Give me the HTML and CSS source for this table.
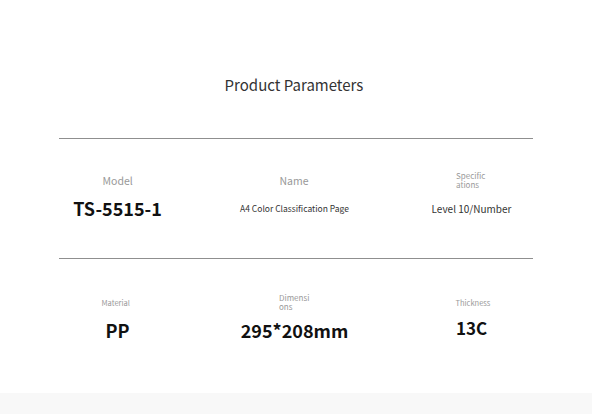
FILE: index.html
```html
<!DOCTYPE html>
<html>
<head>
<meta charset="utf-8">
<link rel="stylesheet" href="styles.css">
</head>
<body>
<div class="page">
  <h1 class="title">Product Parameters</h1>
  <div class="rule"></div>
  <div class="row row-first">
    <div class="cell">
      <div class="label"><span class="lbl-box lbl-lg">Model</span></div>
      <div class="value v-big">TS-5515-1</div>
    </div>
    <div class="cell">
      <div class="label"><span class="lbl-box lbl-lg">Name</span></div>
      <div class="value v-small">A4 Color Classification Page</div>
    </div>
    <div class="cell">
      <div class="label"><span class="lbl-box lbl-sm">Specifications</span></div>
      <div class="value v-mid">Level 10/Number</div>
    </div>
  </div>
  <div class="rule"></div>
  <div class="row">
    <div class="cell">
      <div class="label"><span class="lbl-box lbl-xs">Material</span></div>
      <div class="value v-big">PP</div>
    </div>
    <div class="cell">
      <div class="label"><span class="lbl-box lbl-sm">Dimensions</span></div>
      <div class="value v-big">295*208mm</div>
    </div>
    <div class="cell">
      <div class="label"><span class="lbl-box lbl-xs">Thickness</span></div>
      <div class="value v-big v-13">13C</div>
    </div>
  </div>
  <div class="spacer"></div>
  <div class="footer"></div>
</div>
</body>
</html>
```

FILE: styles.css
```css
* { box-sizing: border-box; }
html, body { margin: 0; padding: 0; background: #fff; }
body { font-family: "Noto Sans CJK SC", "Noto Sans", sans-serif; color: #333; }
.page { width: 592px; height: 414px; display: flex; flex-direction: column; }
.title {
  margin: 75px 0 0 0;
  height: 63px;
  padding-right: 4px;
  font-size: 15px;
  line-height: 20px;
  font-weight: 400;
  color: #333;
  text-align: center;
}
.rule { margin: 0 59px; height: 1px; background: #8f8f8f; }
.row {
  display: grid;
  grid-template-columns: repeat(3, 177px);
  margin-left: 29px;
  height: 119px;
  padding-top: 33px;
  grid-template-rows: 20px 36px;
}
.row-first { padding-top: 31px; }
.cell { display: contents; }
.label { display: flex; justify-content: center; align-items: center; grid-row: 1; }
.value { grid-row: 2; display: flex; justify-content: center; align-items: center; text-align: center; }
.cell:nth-child(1) .label, .cell:nth-child(1) .value { grid-column: 1; }
.cell:nth-child(2) .label, .cell:nth-child(2) .value { grid-column: 2; }
.cell:nth-child(3) .label, .cell:nth-child(3) .value { grid-column: 3; }
.lbl-box { width: 31px; color: #999; word-break: break-all; white-space: normal; }
.lbl-lg { font-size: 10.5px; line-height: 13px; width: 30px; white-space: nowrap; }
.lbl-sm { font-size: 8px; line-height: 9px; }
.lbl-xs { font-size: 7.5px; line-height: 9px; width: 32px; white-space: nowrap; }
.v-big { font-size: 18px; font-weight: 700; color: #111; }
.v-13 { font-size: 17px; padding-bottom: 6px; }
.v-small { font-size: 8.5px; color: #333; }
.v-mid { font-size: 10px; color: #333; }
.spacer { height: 15px; }
.footer { flex: 1; background: #f8f8f8; }
```
